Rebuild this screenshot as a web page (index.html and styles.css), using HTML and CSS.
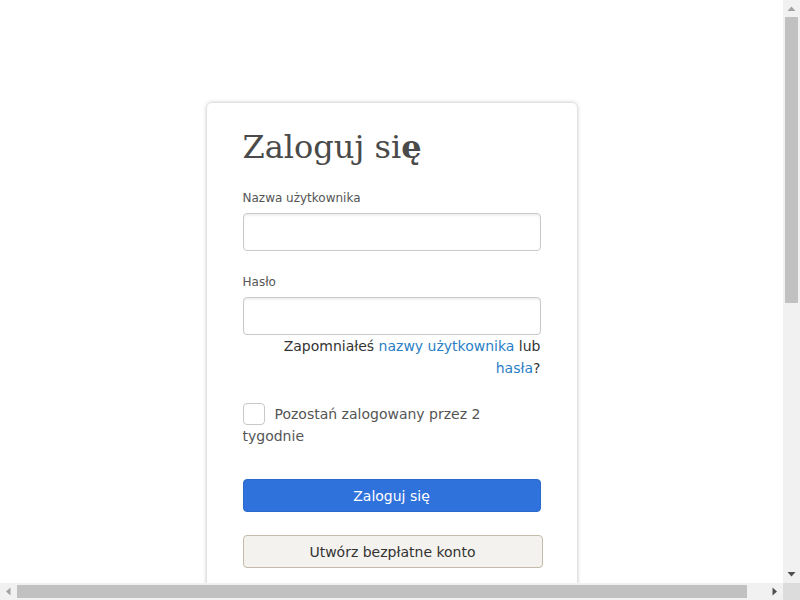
FILE: index.html
```html
<!DOCTYPE html>
<html lang="pl">
<head>
<meta charset="utf-8">
<title>Zaloguj się</title>
<link rel="stylesheet" href="styles.css">
</head>
<body>
<div class="window">
  <main class="content">
    <div class="page">
      <div class="card">
        <h1 class="title">Zaloguj si<span class="fallback">ę</span></h1>
        <form class="form">
          <label class="label" for="user">Nazwa użytkownika</label>
          <input class="input" id="user" type="text">
          <label class="label label-pass" for="pass">Hasło</label>
          <input class="input" id="pass" type="password">
          <p class="forgot">Zapomniałeś <a href="#" class="link">nazwy użytkownika</a> lub <a href="#" class="link">hasła</a>?</p>
          <label class="remember"><span class="check"></span>Pozostań zalogowany przez 2 tygodnie</label>
          <button type="button" class="btn btn-primary">Zaloguj się</button>
          <button type="button" class="btn btn-secondary">Utwórz bezpłatne konto</button>
        </form>
      </div>
    </div>
  </main>
  <div class="vscroll">
    <div class="sb-btn"><svg width="17" height="17" viewBox="0 0 17 17"><polygon points="4.5,11 12.5,11 8.5,6.5" fill="#a3a3a3"/></svg></div>
    <div class="vtrack"><div class="vthumb"></div></div>
    <div class="sb-btn"><svg width="17" height="17" viewBox="0 0 17 17"><polygon points="4.5,6 12.5,6 8.5,10.5" fill="#505050"/></svg></div>
  </div>
  <div class="hscroll">
    <div class="sb-btn"><svg width="17" height="17" viewBox="0 0 17 17"><polygon points="10.5,4.5 10.5,12.5 6,8.5" fill="#a3a3a3"/></svg></div>
    <div class="htrack"><div class="hthumb"></div></div>
    <div class="sb-btn"><svg width="17" height="17" viewBox="0 0 17 17"><polygon points="6.5,4.5 6.5,12.5 11,8.5" fill="#505050"/></svg></div>
  </div>
  <div class="corner"></div>
</div>
</body>
</html>
```
FILE: styles.css
```css
html, body {
  margin: 0;
  padding: 0;
  background: #fff;
  overflow: hidden;
}
body {
  font-family: "DejaVu Sans", Verdana, sans-serif;
  color: #555;
}
.window {
  display: grid;
  grid-template-columns: 1fr 17px;
  grid-template-rows: 1fr 17px;
  width: 100vw;
  height: 100vh;
}
.content {
  overflow: hidden;
  min-width: 0;
  min-height: 0;
}
.page {
  padding-top: 103px;
  padding-bottom: 200px;
}
.card {
  width: 370px;
  margin: 0 auto;
  box-sizing: border-box;
  background: #fff;
  border-radius: 5px;
  box-shadow: 0 0 4px rgba(0,0,0,0.28);
  padding: 22px 36px 300px 36px;
}
.title {
  font-family: "DejaVu Serif", serif;
  font-weight: normal;
  font-size: 32px;
  color: #4a4a4a;
  margin: 0 0 21px 0;
  line-height: 44px;
}
.fallback {
  font-weight: bold;
}
.form {
  display: flex;
  flex-direction: column;
}
.label {
  font-size: 12px;
  color: #555;
  line-height: 16px;
  margin-bottom: 7px;
}
.label-pass {
  margin-top: 23px;
}
.input {
  box-sizing: border-box;
  width: 298px;
  height: 38px;
  border: 1px solid #c9c9c9;
  border-radius: 4px;
  box-shadow: inset 0 2px 2px rgba(0,0,0,0.06);
  margin: 0;
}
.forgot {
  margin: 0;
  text-align: right;
  font-size: 14px;
  line-height: 22px;
  color: #333;
}
.link {
  color: #2a7fc6;
  text-decoration: none;
}
.remember {
  margin-top: 24px;
  font-size: 14px;
  line-height: 22px;
  color: #555;
}
.check {
  display: inline-block;
  box-sizing: border-box;
  width: 22px;
  height: 22px;
  border: 1px solid #c9c9c9;
  border-radius: 4px;
  vertical-align: top;
  margin-right: 10px;
}
.btn {
  box-sizing: border-box;
  font-family: "DejaVu Sans", Verdana, sans-serif;
  font-size: 14px;
  height: 33px;
  border-radius: 4px;
  margin: 0;
  padding: 0;
  cursor: pointer;
}
.btn-primary {
  width: 298px;
  margin-top: 32px;
  background: #3072dc;
  border: 1px solid #2b69cc;
  color: #fff;
}
.btn-secondary {
  width: 300px;
  margin-top: 23px;
  background: #f4f2ee;
  border: 1px solid #c4bcab;
  color: #333;
}
.vscroll {
  display: flex;
  flex-direction: column;
  background: #f1f1f1;
  min-height: 0;
}
.hscroll {
  display: flex;
  background: #f1f1f1;
  min-width: 0;
}
.sb-btn {
  flex: 0 0 17px;
  width: 17px;
  height: 17px;
}
.sb-btn svg {
  display: block;
}
.vtrack {
  flex: 1;
  padding: 0 2px;
}
.vthumb {
  height: 286px;
  background: #c1c1c1;
}
.htrack {
  flex: 1;
  padding: 2px 0;
}
.hthumb {
  width: 730px;
  height: 13px;
  background: #c1c1c1;
}
.corner {
  background: #dcdcdc;
}
```
